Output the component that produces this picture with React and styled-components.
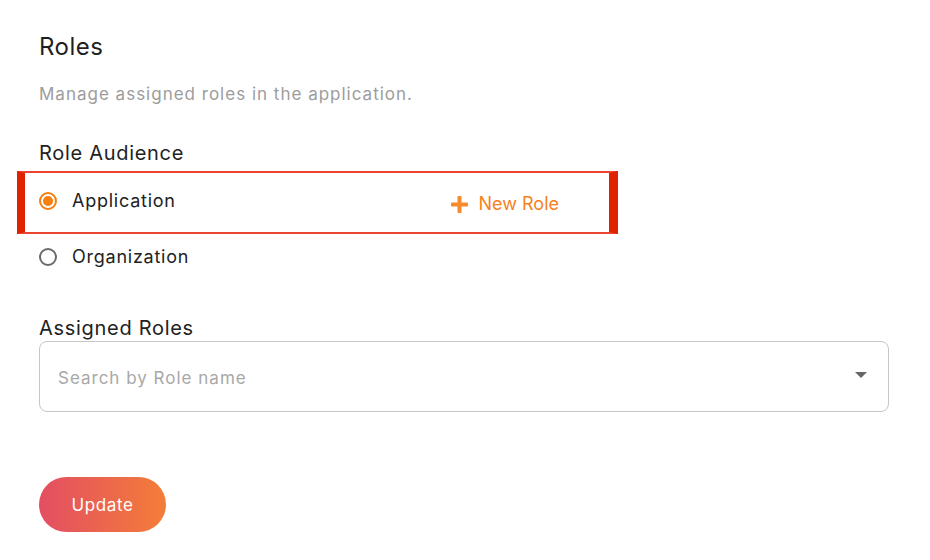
import React, { useState } from "react";
import styled, { createGlobalStyle } from "styled-components";

const GlobalStyle = createGlobalStyle`
  body {
    margin: 0;
    background: #ffffff;
    font-family: "Inter", "Noto Sans", sans-serif;
    color: #222222;
  }
`;

const Page = styled.div`
  padding: 0 41px 0 39px;
`;

const Title = styled.h1`
  margin: 32px 0 0;
  font-size: 24px;
  line-height: 30px;
  font-weight: 400;
  letter-spacing: 0.5px;
  color: #1f1f1f;
`;

const Subtitle = styled.p`
  margin: 20px 0 0;
  font-size: 17px;
  line-height: 24px;
  letter-spacing: 1px;
  color: #9c9c9c;
`;

const SectionLabel = styled.h2`
  margin: ${(p) => p.$top}px 0 0;
  font-size: 20px;
  line-height: 26px;
  font-weight: 400;
  letter-spacing: 0.7px;
  color: #222222;
`;

// highlighted row (annotation frame with thick side bars)
const Highlight = styled.div`
  margin: 5px 0 0 -22px;
  width: 601px;
  box-sizing: border-box;
  display: flex;
  align-items: flex-start;
  padding: 16px 50px 19px 14px;
  border-top: 2px solid #ec4431;
  border-bottom: 2px solid #ec4431;
  border-left: 8px solid #e02200;
  border-right: 9px solid #e02200;
`;

const Option = styled.label`
  display: flex;
  align-items: center;
  gap: 15px;
  font-size: 18px;
  line-height: 24px;
  letter-spacing: 0.75px;
  color: #222222;
  cursor: pointer;
  margin-top: ${(p) => p.$top || 0}px;
`;

const Radio = styled.span`
  width: 18px;
  height: 18px;
  box-sizing: border-box;
  border-radius: 50%;
  border: 2px solid ${(p) => (p.$checked ? "#f57f0f" : "#6a6a6a")};
  display: flex;
  align-items: center;
  justify-content: center;

  &::after {
    content: "";
    width: 10px;
    height: 10px;
    border-radius: 50%;
    background: ${(p) => (p.$checked ? "#f57f0f" : "transparent")};
  }
`;

const NewRole = styled.button`
  margin: 3px 0 -3px auto;
  display: flex;
  align-items: center;
  gap: 11px;
  padding: 0;
  border: none;
  background: none;
  font-family: inherit;
  font-size: 18px;
  line-height: 24px;
  color: #f5821f;
  cursor: pointer;
`;

const Select = styled.div`
  height: 71px;
  box-sizing: border-box;
  border: 1px solid #c6c6c6;
  border-radius: 8px;
  display: flex;
  align-items: center;
  justify-content: space-between;
  padding: 2px 21px 0 18px;
`;

const Placeholder = styled.span`
  font-size: 17px;
  letter-spacing: 1px;
  color: #a8a8a8;
`;

const Caret = styled.span`
  width: 0;
  height: 0;
  margin-top: -5px;
  border-left: 6px solid transparent;
  border-right: 6px solid transparent;
  border-top: 6px solid #666666;
`;

const UpdateButton = styled.button`
  margin-top: 65px;
  width: 127px;
  height: 55px;
  border: none;
  border-radius: 28px;
  background: linear-gradient(90deg, #e34e62 0%, #f47d39 100%);
  color: #ffffff;
  font-family: inherit;
  font-size: 17px;
  letter-spacing: 0.6px;
  cursor: pointer;
`;

function PlusIcon() {
  return (
    <svg width="17" height="17" viewBox="0 0 17 17">
      <rect x="6.5" y="0" width="4" height="17" rx="1" fill="#f78a2b" />
      <rect x="0" y="6.5" width="17" height="4" rx="1" fill="#f78a2b" />
    </svg>
  );
}

export default function App() {
  const [audience, setAudience] = useState("application");

  return (
    <Page>
      <GlobalStyle />
      <Title>Roles</Title>
      <Subtitle>Manage assigned roles in the application.</Subtitle>

      <SectionLabel $top={34}>Role Audience</SectionLabel>
      <Highlight>
        <Option onClick={() => setAudience("application")}>
          <Radio $checked={audience === "application"} />
          Application
        </Option>
        <NewRole>
          <PlusIcon />
          New Role
        </NewRole>
      </Highlight>
      <Option $top={11} onClick={() => setAudience("organization")}>
        <Radio $checked={audience === "organization"} />
        Organization
      </Option>

      <SectionLabel $top={46}>Assigned Roles</SectionLabel>
      <Select>
        <Placeholder>Search by Role name</Placeholder>
        <Caret />
      </Select>

      <UpdateButton>Update</UpdateButton>
    </Page>
  );
}
